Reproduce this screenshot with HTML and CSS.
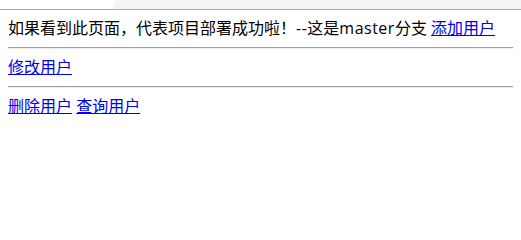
FILE: index.html
```html
<!DOCTYPE html>
<html lang="zh-CN">
<head>
<meta charset="utf-8">
<title>master</title>
<link rel="stylesheet" href="styles.css">
</head>
<body>
<div class="chrome"><div class="chrome-left"></div><div class="chrome-tab"></div></div>
<main class="page">
<p class="line">如果看到此页面，代表项目部署成功啦！<span class="latin">--</span>这是<span class="latin">master</span>分支 <a href="#">添加用户</a></p>
<hr class="rule">
<p class="line"><a href="#">修改用户</a></p>
<hr class="rule">
<p class="line"><a href="#">删除用户</a> <a href="#">查询用户</a></p>
</main>
</body>
</html>
```
FILE: styles.css
```css
html, body {
  margin: 0;
  padding: 0;
  background: #fff;
}
body {
  font-family: "Open Sans", "Noto Sans CJK SC", sans-serif;
  font-size: 16px;
  color: #000;
}
.chrome {
  display: flex;
  height: 9px;
  border-bottom: 1px solid #a9a9a9;
}
.chrome-left {
  width: 113px;
  background: #fff;
}
.chrome-tab {
  flex: 1;
  background: #f5f5f5;
  border-top-left-radius: 6px;
}
.page {
  padding: 8px;
}
.line {
  margin: 0;
  line-height: 21px;
  white-space: nowrap;
}
.latin {
  letter-spacing: 0.5px;
}
.line a {
  color: #0000ee;
  text-decoration: underline;
}
.rule {
  margin: 8px 0;
  border: 0;
  border-top: 1px solid #a0a0a0;
  border-bottom: 1px solid #eeeeee;
  height: 0;
}
```
